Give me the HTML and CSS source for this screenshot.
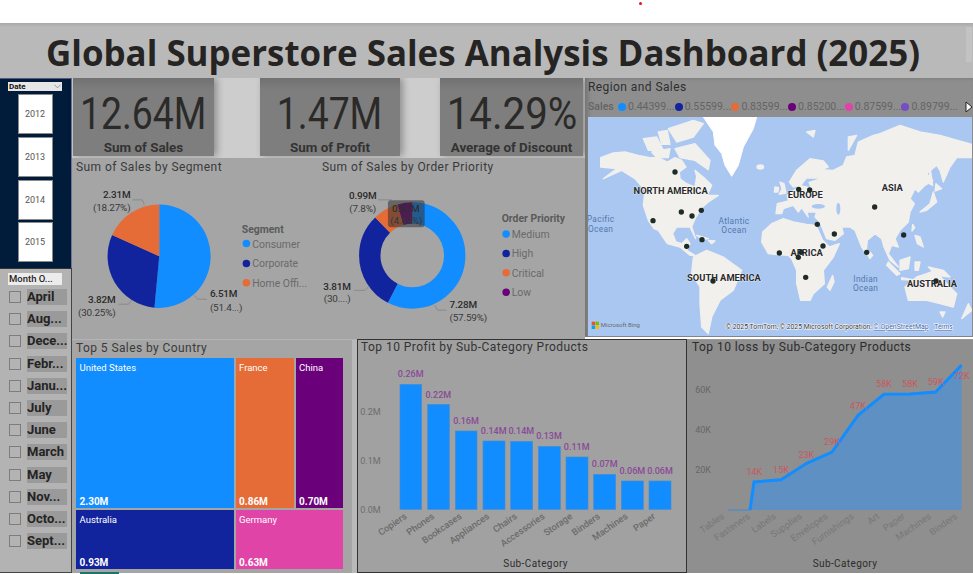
FILE: index.html
```html
<!DOCTYPE html>
<html lang="en">
<head>
<meta charset="utf-8">
<title>Global Superstore Sales Analysis Dashboard (2025)</title>
<link rel="stylesheet" href="styles.css">
</head>
<body>
<div class="page">
  <div class="topbar"><span class="red-dot"></span></div>
  <header class="title-band">
    <h1>Global Superstore Sales Analysis Dashboard (2025)</h1>
    <span class="band-scroll"></span>
  </header>
  <div class="main">
    <aside class="sidebar">
      <section class="date-slicer">
        <div class="date-head"><span>Date</span><svg class="chev" viewBox="0 0 8 5"><path d="M0.5 0.5 L4 4 L7.5 0.5" fill="none" stroke="#777" stroke-width="0.8"/></svg></div>
        <div class="year">2012</div>
        <div class="year">2013</div>
        <div class="year">2014</div>
        <div class="year">2015</div>
      </section>
      <section class="month-slicer">
        <div class="month-head">Month O...</div>
        <ul class="month-list">
          <li><i></i><b>April</b></li>
          <li><i></i><b>Aug...</b></li>
          <li><i></i><b>Dece...</b></li>
          <li><i></i><b>Febr...</b></li>
          <li><i></i><b>Janu...</b></li>
          <li><i></i><b>July</b></li>
          <li><i></i><b>June</b></li>
          <li><i></i><b>March</b></li>
          <li><i></i><b>May</b></li>
          <li><i></i><b>Nov...</b></li>
          <li><i></i><b>Octo...</b></li>
          <li><i></i><b>Sept...</b></li>
        </ul>
      </section>
    </aside>
    <div class="workspace">
      <div class="upper">
        <div class="upper-left">
          <div class="kpis">
            <div class="kpi kpi-a"><div class="kpi-val">12.64M</div><div class="kpi-label">Sum of Sales</div></div>
            <div class="kpi kpi-b"><div class="kpi-val">1.47M</div><div class="kpi-label">Sum of Profit</div></div>
            <div class="kpi kpi-c"><div class="kpi-val">14.29%</div><div class="kpi-label">Average of Discount</div></div>
          </div>
          <div class="pies">
            <div class="pie-block pie-seg">
              <div class="chart-title">Sum of Sales by Segment</div>
              <svg class="pie-svg" viewBox="73 176 247 164">
                <path d="M160 256.7 L160 204.7 A52 52 0 1 1 155.2 308.5 Z" fill="#118dff"/>
                <path d="M160 256.7 L155.2 308.5 A52 52 0 0 1 112.6 235.4 Z" fill="#12239e"/>
                <path d="M160 256.7 L112.6 235.4 A52 52 0 0 1 160 204.7 Z" fill="#e66c37"/>
                <path class="leader" d="M133 200 H143 L145 205"/>
                <path class="leader" d="M119 305 H129 L132 301"/>
                <path class="leader" d="M195 296 L199 300 H208"/>
                <text class="dl" x="131" y="198" text-anchor="end">2.31M</text>
                <text class="dl2" x="131" y="211" text-anchor="end">(18.27%)</text>
                <text class="dl" x="116" y="304" text-anchor="end">3.82M</text>
                <text class="dl2" x="116" y="317" text-anchor="end">(30.25%)</text>
                <text class="dl" x="211" y="298">6.51M</text>
                <text class="dl2" x="211" y="312">(51.4...)</text>
                <text class="lg-title" x="243" y="233">Segment</text>
                <circle cx="247.7" cy="244" r="3.8" fill="#118dff"/><text class="lg" x="253.5" y="248">Consumer</text>
                <circle cx="247.7" cy="264" r="3.8" fill="#12239e"/><text class="lg" x="253.5" y="268">Corporate</text>
                <circle cx="247.7" cy="283.5" r="3.8" fill="#e66c37"/><text class="lg" x="253.5" y="287.5">Home Offi...</text>
              </svg>
            </div>
            <div class="pie-block pie-pri">
              <div class="chart-title">Sum of Sales by Order Priority</div>
              <svg class="pie-svg" viewBox="320 176 265 164">
                <g transform="rotate(-90 412.5 256)" fill="none" stroke-width="21.5">
                  <circle cx="412.5" cy="256" r="42.75" pathLength="100" stroke="#118dff" stroke-dasharray="57.59 100"/>
                  <circle cx="412.5" cy="256" r="42.75" pathLength="100" stroke="#12239e" stroke-dasharray="30.13 100" stroke-dashoffset="-57.59"/>
                  <circle cx="412.5" cy="256" r="42.75" pathLength="100" stroke="#e66c37" stroke-dasharray="7.8 100" stroke-dashoffset="-87.72"/>
                  <circle cx="412.5" cy="256" r="42.75" pathLength="100" stroke="#6b007b" stroke-dasharray="4.48 100" stroke-dashoffset="-95.52"/>
                </g>
                <path class="leader" d="M378 200 H392"/>
                <path class="leader" d="M354 291 H365 L369 287"/>
                <path class="leader" d="M435 306 L438 311 H447"/>
                <text class="dl" x="376.5" y="199" text-anchor="end">0.99M</text>
                <text class="dl2" x="376" y="212" text-anchor="end">(7.8%)</text>
                <text class="dl" x="406" y="212" text-anchor="middle">0.57M</text>
                <text class="dl2" x="406.5" y="224" text-anchor="middle">(4.49%)</text>
                <rect class="tip" x="388" y="200.5" width="37" height="27" rx="3"/>
                <text class="dl" x="350.5" y="291" text-anchor="end">3.81M</text>
                <text class="dl2" x="350.5" y="303" text-anchor="end">(30....)</text>
                <text class="dl" x="450" y="309">7.28M</text>
                <text class="dl2" x="450" y="322">(57.59%)</text>
                <text class="lg-title" x="502.5" y="222.5">Order Priority</text>
                <circle cx="507" cy="234.3" r="3.8" fill="#118dff"/><text class="lg" x="512.5" y="238.3">Medium</text>
                <circle cx="507" cy="254" r="3.8" fill="#12239e"/><text class="lg" x="512.5" y="258">High</text>
                <circle cx="507" cy="273.3" r="3.8" fill="#e66c37"/><text class="lg" x="512.5" y="277.3">Critical</text>
                <circle cx="507" cy="293" r="3.8" fill="#6b007b"/><text class="lg" x="512.5" y="297">Low</text>
              </svg>
            </div>
          </div>
        </div>
        <section class="map-panel">
          <div class="chart-title map-title">Region and Sales</div>
          <div class="map-legend">
            <b>Sales</b>
            <span class="lg-item"><i class="c1"></i>0.44399...</span>
            <span class="lg-item"><i class="c2"></i>0.55599...</span>
            <span class="lg-item"><i class="c3"></i>0.83599...</span>
            <span class="lg-item"><i class="c4"></i>0.85200...</span>
            <span class="lg-item"><i class="c5"></i>0.87599...</span>
            <span class="lg-item"><i class="c6"></i>0.89799...</span>
            <svg class="lg-next" viewBox="0 0 8 12"><path d="M1 1 L7 6 L1 11 Z" fill="#fff" stroke="#222" stroke-width="1"/></svg>
          </div>
          <svg class="map" viewBox="24 140 1152 657">
            <rect x="24" y="140" width="1152" height="657" fill="#a9c7f1"/>
            <g class="land">
              <path d="M62,262 L100,248 L135,245 L175,255 L210,262 L235,262 L262,275 L285,262 L305,270 L318,290 L298,305 L300,325 L320,340 L345,350 L350,318 L345,300 L372,322 L395,345 L382,375 L415,375 L385,395 L365,412 L345,445 L335,470 L347,505 L330,470 L290,470 L278,490 L288,515 L305,520 L320,505 L330,520 L320,540 L345,555 L330,555 L300,530 L262,520 L235,480 L222,475 L205,450 L190,405 L195,360 L165,325 L125,300 L70,325 L110,295 L62,290 Z"/>
              <path d="M190,205 L230,200 L250,240 L205,240 Z M215,245 L270,235 L265,262 L230,262 Z M285,235 L345,220 L390,270 L385,298 L345,270 L300,262 Z M265,175 L340,150 L370,160 L340,200 L290,215 Z M235,185 L262,180 L270,222 L245,222 Z"/>
              <path d="M350,495 L385,505 L370,507 Z M385,510 L405,512 L395,520 Z"/>
              <path d="M340,560 L380,540 L430,560 L485,600 L460,660 L420,690 L395,740 L385,790 L365,770 L360,700 L360,650 L335,610 Z"/>
              <path d="M545,515 L548,485 L575,460 L610,445 L640,455 L680,462 L708,465 L728,510 L748,530 L778,520 L760,560 L730,600 L733,640 L700,670 L690,690 L662,690 L650,640 L650,600 L635,565 L625,555 L590,553 L565,550 Z"/>
              <path d="M758,615 L762,635 L750,660 L742,650 Z"/>
              <path d="M588,430 L592,400 L625,392 L622,375 L650,355 L655,345 L640,350 L628,335 L650,300 L690,265 L730,272 L745,290 L725,298 L760,300 L790,285 L800,260 L825,255 L835,215 L880,195 L900,190 L960,165 L1020,185 L1080,195 L1176,222 L1176,262 L1130,262 L1110,290 L1090,335 L1080,300 L1070,285 L1040,310 L1058,330 L1035,345 L1015,365 L1005,355 L990,385 L1003,400 L990,425 L985,455 L960,480 L945,505 L955,530 L935,525 L925,550 L955,590 L930,570 L912,530 L905,505 L885,490 L862,510 L858,550 L845,530 L825,480 L810,470 L785,470 L790,490 L765,510 L740,505 L720,455 L705,440 L710,425 L680,425 L685,440 L665,412 L655,425 L640,405 L610,415 L605,430 Z"/>
              <path d="M600,335 L612,340 L618,368 L598,372 L606,355 Z M585,350 L596,352 L594,365 L583,365 Z"/>
              <ellipse cx="541" cy="290" rx="10" ry="6"/>
              <path d="M1060,365 L1070,395 L1040,420 L1020,425 L1050,400 Z M1068,340 L1085,355 L1065,362 Z M1050,290 L1058,345 L1048,340 Z"/>
              <path d="M998,462 L1004,472 L996,482 Z M1005,495 L1020,500 L1030,530 L1012,520 Z M870,545 L878,555 L870,565 L864,555 Z"/>
              <path d="M960,570 L990,560 L985,595 L960,600 Z M925,575 L960,610 L950,615 L920,585 Z M965,622 L1010,630 L965,628 Z M1005,575 L1020,575 L1015,600 L1005,600 Z"/>
              <path d="M1045,590 L1090,600 L1110,620 L1070,615 Z"/>
              <path d="M975,650 L1010,620 L1040,610 L1065,600 L1100,640 L1130,670 L1120,710 L1080,700 L1040,690 L985,690 Z M1080,725 L1095,725 L1088,740 Z M1165,700 L1175,720 L1145,745 Z"/>
              <path d="M680,185 L705,180 L700,200 Z M805,200 L830,195 L805,240 Z"/>
            </g>
            <path class="greenland" d="M370,140 L530,140 L520,175 L490,230 L475,285 L455,318 L435,285 L425,250 L405,225 L400,185 Z"/>
            <g fill="#a9c7f1">
              <ellipse cx="715" cy="408" rx="20" ry="7"/>
              <ellipse cx="775" cy="415" rx="6" ry="18"/>
              <path d="M665,345 L680,325 L715,325 L685,335 L690,350 Z"/>
            </g>
            <g class="ocean">
              <text x="62" y="456">Pacific</text><text x="62" y="484">Ocean</text>
              <text x="462" y="462">Atlantic</text><text x="462" y="489">Ocean</text>
              <text x="857" y="636">Indian</text><text x="857" y="663">Ocean</text>
            </g>
            <g class="cont">
              <text x="272" y="371">NORTH AMERICA</text>
              <text x="676" y="384">EUROPE</text>
              <text x="937" y="361">ASIA</text>
              <text x="680" y="558">AFRICA</text>
              <text x="432" y="632">SOUTH AMERICA</text>
              <text x="1056" y="650">AUSTRALIA</text>
            </g>
            <g fill="#1f2b26">
              <circle cx="285" cy="305" r="8"/><circle cx="219" cy="451" r="8"/><circle cx="304" cy="425" r="8"/>
              <circle cx="336" cy="437" r="8"/><circle cx="364" cy="420" r="8"/><circle cx="320" cy="528" r="8"/>
              <circle cx="366" cy="508" r="8"/><circle cx="598" cy="548" r="8"/><circle cx="656" cy="357" r="8"/>
              <circle cx="689" cy="359" r="8"/><circle cx="712" cy="462" r="8"/><circle cx="763" cy="491" r="8"/>
              <circle cx="729" cy="527" r="8"/><circle cx="663" cy="546" r="8"/><circle cx="655" cy="561" r="8"/>
              <circle cx="677" cy="621" r="8"/><circle cx="399" cy="632" r="8"/><circle cx="884" cy="410" r="8"/>
              <circle cx="971" cy="494" r="8"/><circle cx="860" cy="546" r="8"/><circle cx="1068" cy="632" r="8"/>
            </g>
            <rect x="35" y="754" width="10.5" height="10.5" fill="#f25022"/><rect x="46.5" y="754" width="10.5" height="10.5" fill="#7fba00"/>
            <rect x="35" y="765.5" width="10.5" height="10.5" fill="#00a4ef"/><rect x="46.5" y="765.5" width="10.5" height="10.5" fill="#ffb900"/>
            <text class="bing" x="62" y="771" textLength="118" lengthAdjust="spacingAndGlyphs">Microsoft Bing</text>
            <text class="attr" x="437" y="776" textLength="438" lengthAdjust="spacingAndGlyphs">© 2025 TomTom, © 2025 Microsoft Corporation,</text>
            <text class="attr attr-link" x="880" y="776" textLength="166" lengthAdjust="spacingAndGlyphs">© OpenStreetMap</text>
            <text class="attr attr-link" x="1063" y="776" textLength="55" lengthAdjust="spacingAndGlyphs">Terms</text>
          </svg>
        </section>
      </div>
      <div class="lower">
        <section class="tree-panel">
          <div class="chart-title">Top 5 Sales by Country</div>
          <div class="treemap">
            <div class="tree-row tree-row-top">
              <div class="cell c-us"><span>United States</span><b>2.30M</b></div>
              <div class="cell c-fr"><span>France</span><b>0.86M</b></div>
              <div class="cell c-cn"><span>China</span><b>0.70M</b></div>
            </div>
            <div class="tree-row tree-row-bot">
              <div class="cell c-au"><span>Australia</span><b>0.93M</b></div>
              <div class="cell c-de"><span>Germany</span><b>0.63M</b></div>
            </div>
          </div>
        </section>
        <section class="bar-panel">
          <div class="chart-title">Top 10 Profit by Sub-Category Products</div>
          <svg class="z-svg bar-svg" viewBox="24 66 984 645">
            <g class="axis-y"><text x="92" y="241">0.2M</text><text x="92" y="386">0.1M</text><text x="92" y="533">0.0M</text></g>
            <g fill="#118dff" stroke="#4a8ccf" stroke-width="2">
              <rect x="150" y="148" width="65" height="375"/><rect x="233" y="208" width="65" height="315"/>
              <rect x="316" y="288" width="65" height="235"/><rect x="399" y="318" width="66" height="205"/>
              <rect x="482" y="319" width="66" height="204"/><rect x="565" y="334" width="66" height="189"/>
              <rect x="648" y="366" width="66" height="157"/><rect x="731" y="418" width="66" height="105"/>
              <rect x="814" y="438" width="66" height="85"/><rect x="897" y="438" width="66" height="85"/>
            </g>
            <g class="bar-val">
              <text x="182" y="125">0.26M</text><text x="265" y="189">0.22M</text><text x="348" y="266">0.16M</text>
              <text x="431" y="296">0.14M</text><text x="514" y="296">0.14M</text><text x="597" y="313">0.13M</text>
              <text x="680" y="344">0.11M</text><text x="764" y="395">0.07M</text><text x="847" y="416">0.06M</text><text x="930" y="416">0.06M</text>
            </g>
            <g class="cat">
              <text transform="translate(172 548) rotate(-35)">Copiers</text>
              <text transform="translate(255 548) rotate(-35)">Phones</text>
              <text transform="translate(337 548) rotate(-35)">Bookcases</text>
              <text transform="translate(420 548) rotate(-35)">Appliances</text>
              <text transform="translate(503 548) rotate(-35)">Chairs</text>
              <text transform="translate(586 548) rotate(-35)">Accessories</text>
              <text transform="translate(669 548) rotate(-35)">Storage</text>
              <text transform="translate(752 548) rotate(-35)">Binders</text>
              <text transform="translate(835 548) rotate(-35)">Machines</text>
              <text transform="translate(918 548) rotate(-35)">Paper</text>
            </g>
            <text class="axis-name" x="557" y="696">Sub-Category</text>
          </svg>
        </section>
        <section class="loss-panel">
          <div class="chart-title">Top 10 loss by Sub-Category Products</div>
          <svg class="z-svg loss-svg" viewBox="6 66 858 648">
            <g class="axis-y loss-y"><text x="78" y="174">60K</text><text x="78" y="294">40K</text><text x="78" y="413">20K</text></g>
            <path d="M130,525 L195,525 L207,441 L288,434 L365,385 L441,351 L519,241 L597,178 L675,177 L752,171 L830,90 L830,525 Z" fill="#5f90c3"/>
            <path d="M195,525 L207,441 L288,434 L365,385 L441,351 L519,241 L597,178 L675,177 L752,171 L830,90" fill="none" stroke="#118dff" stroke-width="9"/>
            <path d="M130,525 L195,525" fill="none" stroke="#118dff" stroke-width="2"/>
            <g class="loss-val">
              <text x="208" y="419">14K</text><text x="288" y="413">15K</text><text x="364" y="368">23K</text>
              <text x="441" y="329">29K</text><text x="519" y="221">47K</text><text x="597" y="155">58K</text>
              <text x="675" y="155">58K</text><text x="752" y="150">59K</text><text x="830" y="131">72K</text>
            </g>
            <g class="cat loss-cat">
              <text transform="translate(120 548) rotate(-35)">Tables</text>
              <text transform="translate(197 548) rotate(-35)">Fasteners</text>
              <text transform="translate(275 548) rotate(-35)">Labels</text>
              <text transform="translate(353 548) rotate(-35)">Supplies</text>
              <text transform="translate(430 548) rotate(-35)">Envelopes</text>
              <text transform="translate(508 548) rotate(-35)">Furnishings</text>
              <text transform="translate(586 548) rotate(-35)">Art</text>
              <text transform="translate(662 548) rotate(-35)">Paper</text>
              <text transform="translate(740 548) rotate(-35)">Machines</text>
              <text transform="translate(819 548) rotate(-35)">Binders</text>
            </g>
            <text class="axis-name" x="480" y="696">Sub-Category</text>
          </svg>
        </section>
      </div>
    </div>
  </div>
  <span class="tab-strip"></span>
</div>
</body>
</html>
```

FILE: styles.css
```css
* { box-sizing: border-box; }
html, body { margin: 0; padding: 0; background: #fff; }
body { font-family: "Roboto", "Liberation Sans", sans-serif; overflow: hidden; }
.page { position: relative; width: 973px; height: 574px; overflow: hidden; }

.topbar { height: 23px; background: #fff; }
.red-dot { position: absolute; left: 639px; top: 2px; width: 3px; height: 3px; border-radius: 50%; background: #e81123; }

.title-band {
  position: relative; height: 55px; background: linear-gradient(#a9a9a9 0, #b9b9b9 4px);
  display: flex; justify-content: center; align-items: center; padding: 6px 7px 0 0;
}
.title-band h1 { margin: 0; font-family: "Open Sans", sans-serif; font-weight: 700; font-size: 34.9px; line-height: 1; color: #252423; white-space: nowrap; }
.band-scroll { position: absolute; right: 1px; top: 4px; width: 6px; height: 35px; background: #c3c3c3; }

.main { display: flex; height: 495px; }
.sidebar { width: 72px; display: flex; flex-direction: column; }

.date-slicer { height: 190px; background: #011c3a; border-right: 1px solid #6d7396; border-top: 1px solid #53587e; padding: 3px 9px 0 8px; display: flex; flex-direction: column; align-items: center; }
.date-head { width: 54px; height: 9px; background: #e6e6e6; display: flex; justify-content: space-between; align-items: center; padding: 0 0 0 1px; font-size: 8px; font-weight: 700; color: #111; margin-bottom: 3px; }
.chev { width: 7px; height: 5px; margin-right: 1px; }
.year { width: 35px; height: 40px; margin-bottom: 2.8px; background: #fff; border: 1px solid #8a8a8a; display: flex; align-items: center; justify-content: center; font-size: 9px; color: #555; }

.month-slicer { flex: 1; background: #b3b3b3; border-top: 1px solid #333; border-right: 1px solid #444; border-bottom: 1px solid #444; padding: 4px 0 0 8px; }
.month-head { width: 54px; height: 12px; background: #ececec; font-size: 9.5px; font-weight: 500; line-height: 12px; padding-left: 1px; color: #252423; margin-bottom: 1px; }
.month-list { list-style: none; margin: 0; padding: 0; }
.month-list li { display: flex; align-items: center; height: 22.2px; }
.month-list i { display: block; width: 12px; height: 12px; margin: 0 6px 0 1px; border: 1px solid #7d7d7d; }
.month-list b { display: block; width: 40px; height: 16px; line-height: 16px; background: #9a9a9a; font-size: 13px; font-weight: 700; color: #252423; white-space: nowrap; overflow: hidden; }

.workspace { width: 901px; display: flex; flex-direction: column; }
.upper { display: flex; height: 261px; }
.upper-left { width: 513px; display: flex; flex-direction: column; }
.kpis { height: 80px; display: flex; background: #cdcdcd; padding: 0 2px 2px 1px; }
.kpi { height: 78px; background: linear-gradient(#717171 0, #7e7e7e 12px); box-shadow: 3px 0 7px rgba(0,0,0,.3); display: flex; flex-direction: column; align-items: center; }
.kpi-a { width: 141px; }
.kpi-b { width: 140px; margin-left: 46px; }
.kpi-c { width: 143px; margin-left: 40px; }
.kpi-val { font-size: 45px; line-height: 50px; margin-top: 11px; color: #2b2a29; transform: scaleX(.83); white-space: nowrap; }
.kpi-c .kpi-val { transform: scaleX(.895); }
.kpi-label { font-size: 13.4px; font-weight: 700; line-height: 16px; margin-top: 1px; color: #333; white-space: nowrap; }

.pies { flex: 1; display: flex; background: #a5a5a5; }
.pie-block { display: flex; flex-direction: column; }
.pie-seg { width: 247px; }
.pie-pri { width: 266px; }
.pie-pri .chart-title { padding-left: 3px; }
.pie-svg { display: block; width: 100%; height: 163px; }
.chart-title { height: 18px; line-height: 19px; padding-left: 4px; font-size: 12px; letter-spacing: .42px; color: #3a3a3a; white-space: nowrap; }

svg text { font-family: "Roboto", "Liberation Sans", sans-serif; }
.dl { font-size: 10px; letter-spacing: -.2px; font-weight: 500; fill: #2a2a2a; }
.dl2 { font-size: 10px; letter-spacing: -.2px; fill: #3a3a3a; }
.leader { fill: none; stroke: #8a8a8a; stroke-width: 1; }
.tip { fill: #333; opacity: .55; }
.lg-title { font-size: 10.5px; font-weight: 700; fill: #5a5a5a; }
.lg { font-size: 10.5px; fill: #6a6a6a; }

.map-panel { width: 388px; height: 259px; background: #8e8e8e; padding-left: 3px; box-shadow: inset 3px 0 4px rgba(0,0,0,.18); }
.map-title { padding-left: 0; color: #2f2f2f; }
.map-legend { height: 21px; display: flex; align-items: center; font-size: 10.5px; color: #646464; position: relative; }
.map-legend b { width: 30px; font-weight: 500; }
.lg-item { display: flex; align-items: center; width: 56.7px; white-space: nowrap; }
.lg-item i { display: block; width: 8px; height: 8px; border-radius: 50%; margin: 0 2px 0 0; flex: none; }
.c1 { background: #118dff; } .c2 { background: #12239e; } .c3 { background: #e66c37; }
.c4 { background: #6b007b; } .c5 { background: #e044a7; } .c6 { background: #744ec2; }
.lg-next { position: absolute; right: 0; top: 5px; width: 8px; height: 12px; }
.map { display: block; width: 384px; height: 219px; }
.map text { text-anchor: middle; }
.land { fill: #f1f0ed; stroke: #f1f0ed; stroke-width: 4; stroke-linejoin: round; }
.greenland { fill: #fff; stroke: #fff; stroke-width: 3; stroke-linejoin: round; }
.ocean text { font-size: 25px; letter-spacing: 1px; fill: #5577ad; }
.cont text { font-size: 28px; font-weight: 700; fill: #2a2a2a; paint-order: stroke; stroke: #fff; stroke-width: 2px; }
.map .bing, .map .attr { text-anchor: start; }
.bing { font-size: 18px; fill: #6b6b6b; }
.attr { font-size: 19px; fill: #333; paint-order: stroke; stroke: #fff; stroke-width: 3px; }
.attr-link { fill: #3b5fa8; text-decoration: underline; }

.lower { display: flex; height: 234px; }
.tree-panel { width: 285px; background: #a5a5a5; box-shadow: inset -5px 0 0 #b9b9b9; border-top: 1px solid #b5b5b5; }
.tree-panel .chart-title { padding-left: 4px; height: 18px; line-height: 16px; }
.treemap { width: 267px; margin-left: 4px; display: flex; flex-direction: column; gap: 2px; }
.tree-row { display: flex; gap: 1.5px; }
.tree-row-top { height: 150px; }
.tree-row-bot { height: 59px; }
.cell { display: flex; flex-direction: column; justify-content: space-between; padding: 4px 3.5px 0; color: #fff; font-size: 9.5px; line-height: 12px; white-space: nowrap; }
.cell b { font-size: 10px; font-weight: 700; }
.c-us { width: 158px; background: #118dff; }
.c-fr { width: 58.5px; background: #e66c37; }
.c-cn { width: 47.5px; background: #6b007b; }
.c-au { width: 158px; background: #12239e; }
.c-de { width: 107.5px; background: #e044a7; }

.bar-panel { width: 330px; background: #a1a1a1; border: 1px solid #333; }
.bar-panel .chart-title { height: 17px; padding-left: 3px; line-height: 15px; letter-spacing: .45px; color: #333; }
.loss-panel { width: 286px; background: #8f8f8f; border-top: 1px solid #999; }
.loss-panel .chart-title { height: 17px; padding-left: 5px; line-height: 15px; letter-spacing: .45px; color: #2c2c2c; }
.z-svg { display: block; width: 100%; }
.bar-svg { height: 215px; }
.loss-svg { height: 216px; }
.axis-y text { font-size: 27px; text-anchor: end; fill: #6d6d6d; }
.loss-y text { fill: #666; }
.bar-val text { font-size: 27px; font-weight: 500; text-anchor: middle; fill: #8a4a98; }
.loss-val text { font-size: 27px; text-anchor: middle; fill: #c8585f; }
.cat text { font-size: 28px; font-weight: 500; text-anchor: end; fill: #6b6b6b; }
.loss-cat text { fill: #777; font-weight: 400; }
.axis-name { font-size: 30px; text-anchor: middle; fill: #2c2c2c; letter-spacing: 1.2px; }

.tab-strip { position: absolute; left: 80px; top: 572px; width: 39px; height: 2px; background: #1f7468; }
```
